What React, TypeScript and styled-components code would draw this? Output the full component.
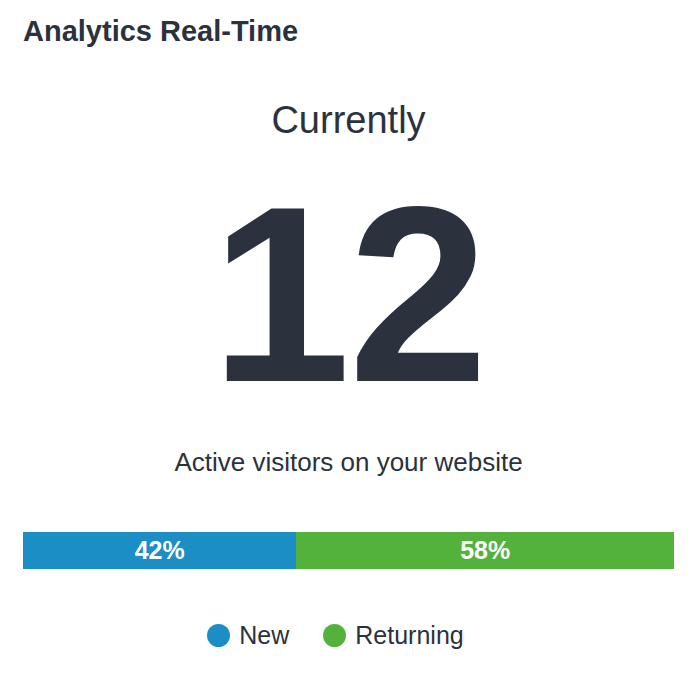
import React from "react";
import styled, { createGlobalStyle } from "styled-components";

const Global = createGlobalStyle`
  html, body { margin: 0; padding: 0; background: #ffffff; }
  body { font-family: "Liberation Sans", Arial, sans-serif; color: #2b323d; }
`;

const Widget = styled.div`
  width: 694px;
  height: 676px;
  box-sizing: border-box;
  padding: 17px 20px 0 23px;
  display: flex;
  flex-direction: column;
`;

const Title = styled.h1`
  margin: 0;
  font-size: 29px;
  line-height: 28px;
  font-weight: 700;
  color: #2b323d;
`;

const Currently = styled.div`
  margin-top: 56px;
  text-align: center;
  font-size: 38px;
  line-height: 38px;
  color: #2b323d;
`;

const BigNumber = styled.div`
  margin-top: 30px;
  text-align: center;
  font-size: 251px;
  line-height: 251px;
  font-weight: 700;
  color: #2b323d;
  letter-spacing: -2px;
`;

const Caption = styled.div`
  margin-top: 29px;
  text-align: center;
  font-size: 26px;
  line-height: 26px;
  color: #2b323d;
`;

const Bar = styled.div`
  margin-top: 57px;
  display: flex;
  height: 37px;
`;

const Segment = styled.div<{ $color: string }>`
  background: ${(p) => p.$color};
  color: #ffffff;
  font-size: 25px;
  font-weight: 700;
  display: flex;
  align-items: center;
  justify-content: center;
`;

const Legend = styled.div`
  margin-top: 54px;
  padding-right: 26px;
  display: flex;
  justify-content: center;
  gap: 34px;
`;

const LegendItem = styled.div`
  display: flex;
  align-items: center;
  gap: 9px;
  font-size: 25px;
  line-height: 25px;
  color: #2b323d;
`;

const Dot = styled.span<{ $color: string }>`
  width: 23px;
  height: 23px;
  border-radius: 50%;
  background: ${(p) => p.$color};
  display: inline-block;
`;

const BLUE = "#1a8ec5";
const GREEN = "#53b23c";

export default function App() {
  const segments = [
    { label: "New", value: 42, color: BLUE },
    { label: "Returning", value: 58, color: GREEN },
  ];
  return (
    <>
      <Global />
      <Widget>
        <Title>Analytics Real-Time</Title>
        <Currently>Currently</Currently>
        <BigNumber>12</BigNumber>
        <Caption>Active visitors on your website</Caption>
        <Bar>
          {segments.map((s) => (
            <Segment key={s.label} $color={s.color} style={{ width: `${s.value}%` }}>
              {s.value}%
            </Segment>
          ))}
        </Bar>
        <Legend>
          {segments.map((s) => (
            <LegendItem key={s.label}>
              <Dot $color={s.color} />
              {s.label}
            </LegendItem>
          ))}
        </Legend>
      </Widget>
    </>
  );
}
